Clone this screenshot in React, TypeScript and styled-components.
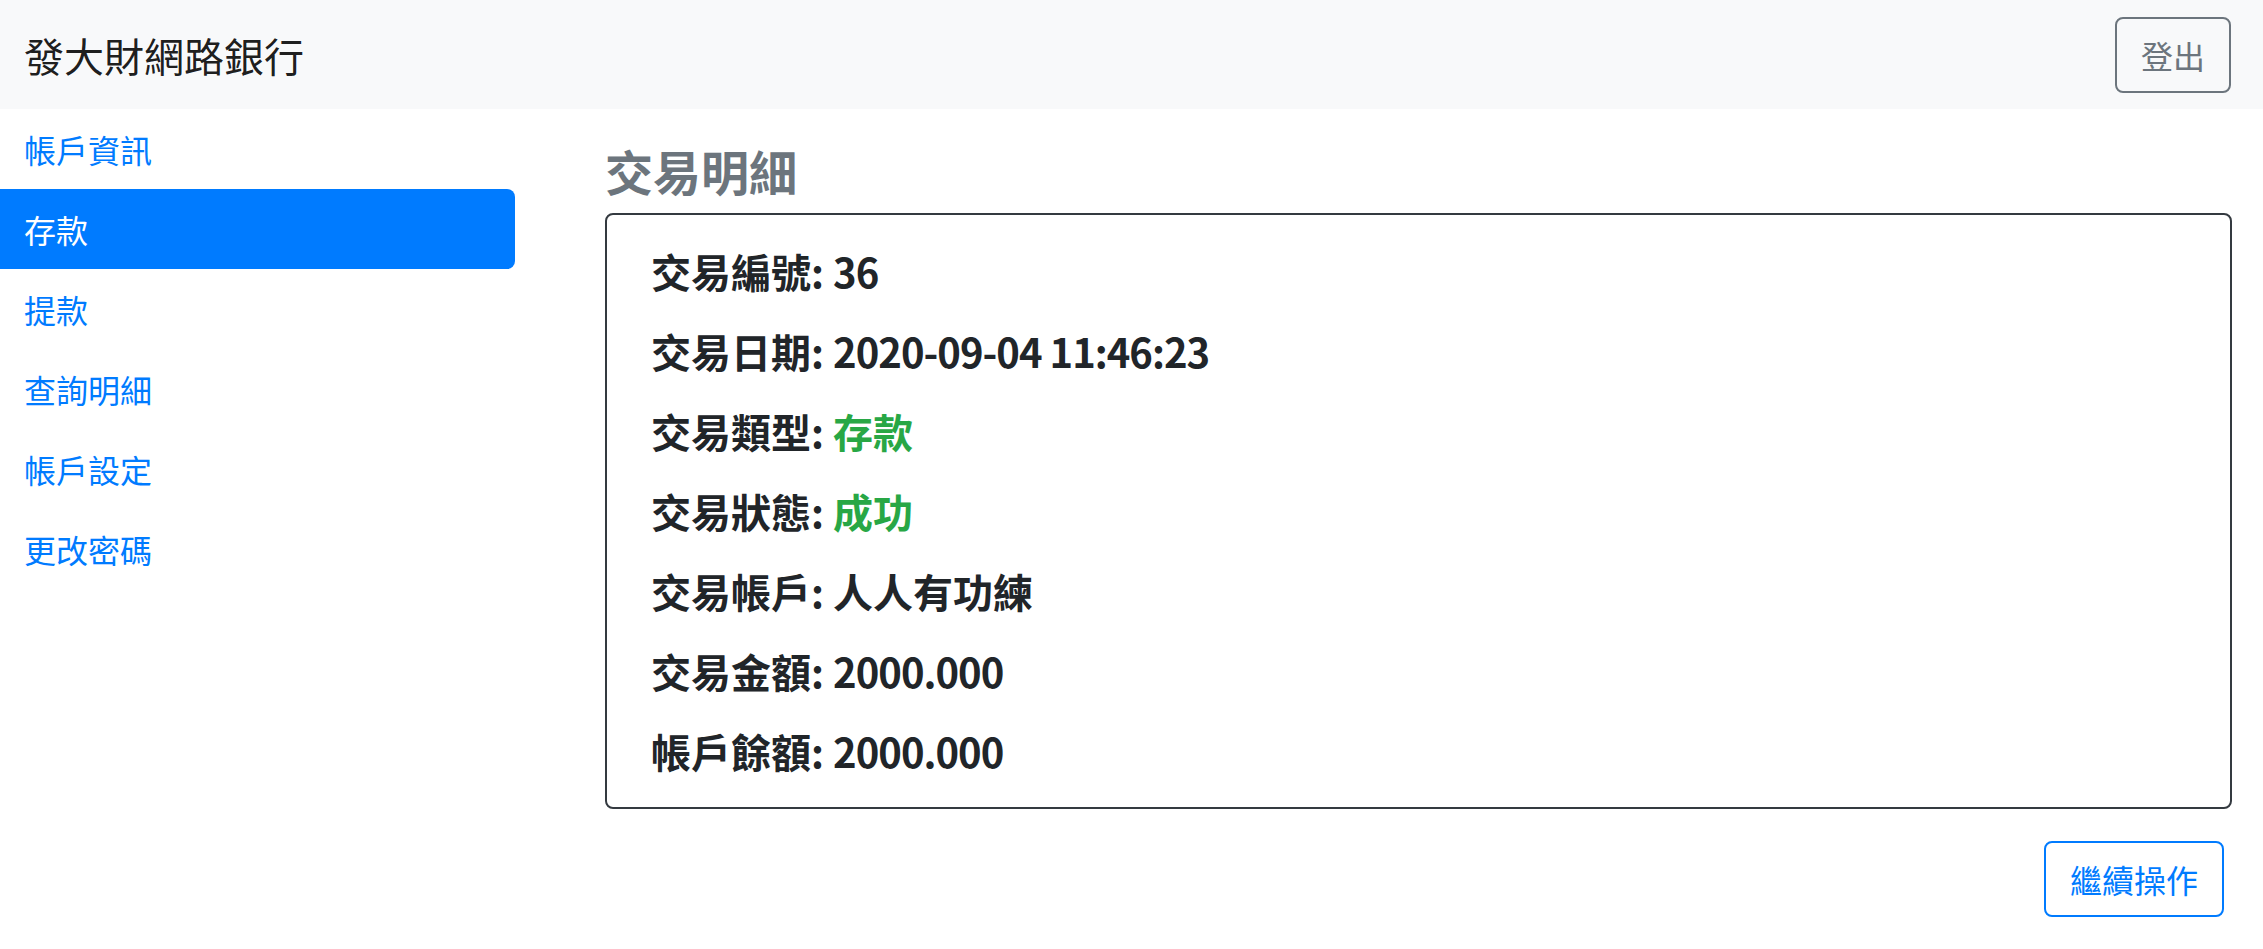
import React from "react";
import styled, { createGlobalStyle } from "styled-components";

const GlobalStyle = createGlobalStyle`
  html, body {
    margin: 0;
    padding: 0;
    background: #ffffff;
    font-family: "Noto Sans CJK TC", "Noto Sans", sans-serif;
    color: #212529;
  }
  * { box-sizing: border-box; }
`;

const Page = styled.div`
  width: 100%;
  min-height: 949px;
  display: flex;
  flex-direction: column;
`;

const NavBar = styled.header`
  height: 109px;
  background: #f8f9fa;
  display: flex;
  align-items: center;
  justify-content: space-between;
  padding: 0 32px 0 24px;
`;

const Brand = styled.div`
  font-size: 40px;
  line-height: 60px;
  font-weight: 400;
  color: rgba(0, 0, 0, 0.9);
`;

const OutlineButton = styled.button<{ $tone: "secondary" | "primary" }>`
  font-family: inherit;
  font-size: 32px;
  line-height: 48px;
  font-weight: 400;
  padding: 12px 24px;
  background: transparent;
  border-radius: 8px;
  border: 2px solid ${(p) => (p.$tone === "primary" ? "#007bff" : "#6c757d")};
  color: ${(p) => (p.$tone === "primary" ? "#007bff" : "#6c757d")};
  cursor: pointer;
`;

const Body = styled.div`
  display: flex;
  align-items: flex-start;
`;

const SideNav = styled.nav`
  width: 515px;
  flex-shrink: 0;
  display: flex;
  flex-direction: column;
`;

const NavLink = styled.a<{ $active?: boolean }>`
  display: block;
  height: 80px;
  padding: 16px 24px;
  font-size: 32px;
  line-height: 48px;
  text-decoration: none;
  color: ${(p) => (p.$active ? "#ffffff" : "#007bff")};
  background: ${(p) => (p.$active ? "#007bff" : "transparent")};
  border-radius: 0 8px 8px 0;
`;

const Main = styled.main`
  flex: 1;
  padding: 32px 31px 0 90px;
  display: flex;
  flex-direction: column;
`;

const Heading = styled.h4`
  margin: 0 0 14px 0;
  font-size: 48px;
  line-height: 58px;
  font-weight: 700;
  color: #6c757d;
`;

const Card = styled.section`
  border: 2px solid #343a40;
  border-radius: 8px;
  padding: 32px 44px;
  display: flex;
  flex-direction: column;
  gap: 32px;
`;

const Row = styled.h5`
  margin: 0;
  font-size: 40px;
  line-height: 48px;
  font-weight: 700;
  color: #212529;
`;

const Value = styled.span<{ $success?: boolean; $numeric?: boolean }>`
  color: ${(p) => (p.$success ? "#28a745" : "inherit")};
  letter-spacing: ${(p) => (p.$numeric ? "-1px" : "0")};
`;

const Actions = styled.div`
  display: flex;
  justify-content: flex-end;
  padding: 32px 8px 0 0;
`;

const rows: { label: string; value: string; success?: boolean; numeric?: boolean }[] = [
  { label: "交易編號", value: "36", numeric: true },
  { label: "交易日期", value: "2020-09-04 11:46:23", numeric: true },
  { label: "交易類型", value: "存款", success: true },
  { label: "交易狀態", value: "成功", success: true },
  { label: "交易帳戶", value: "人人有功練" },
  { label: "交易金額", value: "2000.000", numeric: true },
  { label: "帳戶餘額", value: "2000.000", numeric: true },
];

const links = ["帳戶資訊", "存款", "提款", "查詢明細", "帳戶設定", "更改密碼"];

export default function App() {
  return (
    <Page>
      <GlobalStyle />
      <NavBar>
        <Brand>發大財網路銀行</Brand>
        <OutlineButton $tone="secondary">登出</OutlineButton>
      </NavBar>
      <Body>
        <SideNav>
          {links.map((l) => (
            <NavLink key={l} href="#" $active={l === "存款"}>
              {l}
            </NavLink>
          ))}
        </SideNav>
        <Main>
          <Heading>交易明細</Heading>
          <Card>
            {rows.map((r) => (
              <Row key={r.label}>
                {r.label}:{" "}
                <Value $success={r.success} $numeric={r.numeric}>
                  {r.value}
                </Value>
              </Row>
            ))}
          </Card>
          <Actions>
            <OutlineButton $tone="primary">繼續操作</OutlineButton>
          </Actions>
        </Main>
      </Body>
    </Page>
  );
}
